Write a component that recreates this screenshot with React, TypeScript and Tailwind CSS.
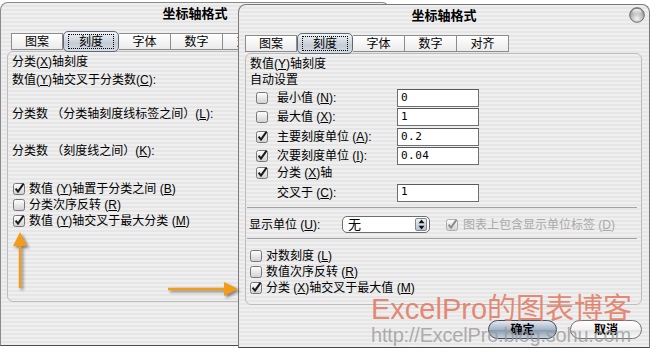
import React from 'react';

const FONT = "font-['Liberation_Sans','Noto_Sans_CJK_SC',sans-serif]";
const STRIPES =
  'bg-[repeating-linear-gradient(to_bottom,#efefef_0px,#efefef_2px,#e6e6e6_2px,#e6e6e6_4px)]';

function Check({ on, dim }: { on?: boolean; dim?: boolean }) {
  return (
    <svg width="12" height="12" viewBox="0 0 12 12" className="shrink-0 overflow-visible">
      <defs>
        <linearGradient id="cbg" x1="0" y1="0" x2="0" y2="1">
          <stop offset="0" stopColor="#ffffff" />
          <stop offset="1" stopColor="#d0d0d0" />
        </linearGradient>
      </defs>
      <rect x="0.5" y="0.5" width="11" height="11" rx="2" fill="url(#cbg)" stroke={dim ? '#acacac' : '#777'} />
      {on && (
        <path
          d="M2.6 5.6 L5 8.6 L10.6 0.6"
          fill="none"
          stroke={dim ? '#8c8c8c' : '#1a1a1a'}
          strokeWidth="2"
        />
      )}
    </svg>
  );
}

function Mn({ k }: { k: string }) {
  // mnemonic letter in half-width parens
  return (
    <span>
      (<u>{k}</u>)
    </span>
  );
}

function Tabs({ active }: { active: number }) {
  const labels = ['图案', '刻度', '字体', '数字', '对齐'];
  return (
    <div className="flex h-[17px] items-stretch text-[12px]">
      {labels.map((l, i) =>
        i === active ? (
          <div
            key={l}
            className="relative z-10 -my-[2px] flex w-[56px] items-center justify-center rounded-[5px] border border-[#5d6877] bg-[linear-gradient(to_bottom,#f1f4f7,#c4ccd6_60%,#d6dce3)]"
          >
            <span className="flex h-[15px] w-[46px] items-center justify-center border border-dotted border-black leading-none">
              {l}
            </span>
          </div>
        ) : (
          <div
            key={l}
            className={
              'flex w-[52px] items-center justify-center border-y border-r border-[#8c8c8c] bg-[linear-gradient(to_bottom,#ffffff,#ebebeb)] leading-none ' +
              (i === 0 ? 'border-l' : '')
            }
          >
            {l}
          </div>
        ),
      )}
    </div>
  );
}

function CloseBtn() {
  return (
    <svg width="16" height="16" viewBox="0 0 16 16" className="justify-self-end mr-[4px]">
      <defs>
        <radialGradient id="cls" cx="0.5" cy="0.75" r="0.7">
          <stop offset="0" stopColor="#f4f4f4" />
          <stop offset="1" stopColor="#8d8d8d" />
        </radialGradient>
        <linearGradient id="clh" x1="0" y1="0" x2="0" y2="1">
          <stop offset="0" stopColor="#ffffff" stopOpacity="0.95" />
          <stop offset="1" stopColor="#ffffff" stopOpacity="0" />
        </linearGradient>
      </defs>
      <circle cx="8" cy="8" r="7.3" fill="url(#cls)" stroke="#6c6c6c" />
      <ellipse cx="8" cy="5" rx="4.6" ry="3" fill="url(#clh)" />
    </svg>
  );
}

function Field({ v }: { v: string }) {
  return (
    <div className="flex h-[18px] w-[82px] items-center border border-[#6f6f6f] border-t-[#5a5a5a] bg-white pl-[3px] font-['DejaVu_Sans_Mono',monospace] text-[11px] tracking-[0.5px]">
      {v}
    </div>
  );
}

function LeftWindow() {
  return (
    <div
      className={`absolute left-0 top-[2px] flex h-[344px] w-[390px] flex-col rounded-t-[8px] border border-[#8a8a8a] border-b-[#4d4d4d] ${STRIPES}`}
    >
      <div className="grid h-[20px] grid-cols-[1fr_auto_1fr] items-center">
        <span />
        <span className="text-[13px] font-bold leading-none">坐标轴格式</span>
        <span />
      </div>
      <div className="ml-[10px] mt-[10px]">
        <Tabs active={1} />
      </div>
      <div
        className={`ml-[6px] mt-[1px] flex h-[251px] w-[397px] flex-col rounded-[6px] border border-[#bdbdbd] text-[12px] ${STRIPES}`}
      >
        <div className="mt-[1px] flex h-[17px] items-center pl-[4px]">
          分类 <Mn k="X" />
          轴刻度
        </div>
        <div className="mt-[1px] flex h-[17px] items-center pl-[4px]">
          数值 <Mn k="Y" />
          轴交叉于分类数 <Mn k="C" />:
        </div>
        <div className="mt-[17px] flex h-[17px] items-center pl-[4px]">
          分类数 （分类轴刻度线标签之间）<Mn k="L" />:
        </div>
        <div className="mt-[20px] flex h-[17px] items-center pl-[4px]">
          分类数 （刻度线之间）<Mn k="K" />:
        </div>
        <div className="mt-[22px] flex h-[16px] items-center gap-[4px] pl-[5px]">
          <Check on />
          <span>
            数值 <Mn k="Y" />
            轴置于分类之间 <Mn k="B" />
          </span>
        </div>
        <div className="flex h-[16px] items-center gap-[4px] pl-[5px]">
          <Check />
          <span>
            分类次序反转 <Mn k="R" />
          </span>
        </div>
        <div className="flex h-[16px] items-center gap-[4px] pl-[5px]">
          <Check on />
          <span>
            数值 <Mn k="Y" />
            轴交叉于最大分类 <Mn k="M" />
          </span>
        </div>
      </div>
    </div>
  );
}

function InputRow({ on, label, v }: { on: boolean; label: React.ReactNode; v: string }) {
  return (
    <div className="flex h-[19.5px] items-center pl-[10px]">
      <Check on={on} />
      <span className="ml-[9px] w-[120px]">{label}</span>
      <Field v={v} />
    </div>
  );
}

function RightWindow() {
  return (
    <div
      className={`absolute left-[238px] top-[4px] flex h-[344px] w-[412px] flex-col rounded-t-[8px] border border-[#7a7a7a] border-b-[#474747] ${STRIPES}`}
    >
      <div className="grid h-[20px] grid-cols-[1fr_auto_1fr] items-center">
        <span />
        <span className="text-[13px] font-bold leading-none">坐标轴格式</span>
        <CloseBtn />
      </div>
      <div className="ml-[6px] mt-[10px]">
        <Tabs active={1} />
      </div>
      <div
        className={`ml-[6px] mt-[1px] flex h-[252px] w-[397px] flex-col rounded-[6px] border border-[#bdbdbd] text-[12px] ${STRIPES}`}
      >
        <div className="mt-[1px] flex h-[17px] items-center pl-[4px]">
          数值 <Mn k="Y" />
          轴刻度
        </div>
        <div className="flex h-[16px] items-center pl-[4px]">自动设置</div>
        <InputRow
          on={false}
          v="0"
          label={
            <>
              最小值 <Mn k="N" />:
            </>
          }
        />
        <InputRow
          on={false}
          v="1"
          label={
            <>
              最大值 <Mn k="X" />:
            </>
          }
        />
        <InputRow
          on
          v="0.2"
          label={
            <>
              主要刻度单位 <Mn k="A" />:
            </>
          }
        />
        <InputRow
          on
          v="0.04"
          label={
            <>
              次要刻度单位 <Mn k="I" />:
            </>
          }
        />
        <div className="flex h-[13px] items-center pl-[10px]">
          <Check on />
          <span className="ml-[9px]">
            分类 <Mn k="X" />
            轴
          </span>
        </div>
        <div className="mt-[4px] flex h-[19px] items-center pl-[31px]">
          <span className="w-[120px]">
            交叉于 <Mn k="C" />:
          </span>
          <Field v="1" />
        </div>
        <div className="ml-[1px] mr-[4px] mt-[5px] h-0 border-t border-[#a2a2a2]" />
        <div className="mt-[7px] flex h-[19px] items-center pl-[3px]">
          <span className="w-[93px]">
            显示单位 <Mn k="U" />:
          </span>
          <div className="flex h-[17px] w-[88px] items-stretch rounded-[5px] border border-[#6e6e6e] bg-white">
            <span className="flex flex-1 items-center pl-[5px] text-[13px] leading-none">无</span>
            <span className="my-[1px] mr-[2px] flex w-[12px] items-center justify-center rounded-[2px] border border-[#7d8897] bg-[linear-gradient(to_bottom,#eef2f7,#b6c1ce)]">
              <svg width="7" height="11" viewBox="0 0 7 11">
                <path d="M3.5 0.5 L6.5 4.2 L0.5 4.2 Z" fill="#111" />
                <path d="M3.5 10.5 L6.5 6.8 L0.5 6.8 Z" fill="#111" />
              </svg>
            </span>
          </div>
          <span className="ml-[16px] flex items-center gap-[5px] text-[#a9a9a9]">
            <Check on dim />
            <span>
              图表上包含显示单位标签 <Mn k="D" />
            </span>
          </span>
        </div>
        <div className="ml-[1px] mr-[4px] mt-[4px] h-0 border-t border-[#a2a2a2]" />
        <div className="mt-[9px] flex h-[16px] items-center gap-[4px] pl-[4px]">
          <Check />
          <span>
            对数刻度 <Mn k="L" />
          </span>
        </div>
        <div className="flex h-[16px] items-center gap-[4px] pl-[4px]">
          <Check />
          <span>
            数值次序反转 <Mn k="R" />
          </span>
        </div>
        <div className="flex h-[16px] items-center gap-[4px] pl-[4px]">
          <Check on />
          <span>
            分类 <Mn k="X" />
            轴交叉于最大值 <Mn k="M" />
          </span>
        </div>
      </div>
      <div className="mr-[7px] mt-[15px] flex justify-end gap-[13px] text-[12px] font-bold">
        <button className="flex h-[19px] w-[69px] items-center justify-center rounded-full border border-[#3e4c5e] bg-[linear-gradient(to_bottom,#e3e9f0,#a4b4c6_50%,#8a9db3_55%,#c5d1de)] leading-none">
          确定
        </button>
        <button className="flex h-[19px] w-[72px] items-center justify-center rounded-full border border-[#737373] bg-[linear-gradient(to_bottom,#ffffff,#f2f2f2_50%,#e2e2e2_55%,#fafafa)] leading-none">
          取消
        </button>
      </div>
    </div>
  );
}

function Arrows() {
  return (
    <>
      <svg
        width="20"
        height="64"
        viewBox="0 0 20 64"
        className="absolute left-[10px] top-[230px] drop-shadow-[2px_2px_1.5px_rgba(0,0,0,0.45)]"
      >
        <path d="M10 2 L17 16 L11.2 16 L11.2 58 L8.8 58 L8.8 16 L3 16 Z" fill="#f39c1a" />
      </svg>
      <svg
        width="76"
        height="20"
        viewBox="0 0 76 20"
        className="absolute left-[166px] top-[279px] drop-shadow-[2px_2px_1.5px_rgba(0,0,0,0.45)]"
      >
        <path d="M2 8.8 L58 8.8 L58 3 L72 10 L58 17 L58 11.2 L2 11.2 Z" fill="#f39c1a" />
      </svg>
    </>
  );
}

export default function App() {
  return (
    <div className={`relative h-[355px] w-[656px] overflow-hidden bg-white text-black ${FONT}`}>
      <LeftWindow />
      <RightWindow />
      <div className="pointer-events-none absolute left-[371px] top-[292px] flex flex-col">
        <span className="text-[29px] leading-[34px] text-[#e2775e]/85">ExcelPro的图表博客</span>
        <span className="-mt-[2px] text-[20px] leading-[22px] tracking-[-0.2px] text-[#9a9a9a]/80">
          http://ExcelPro.blog.sohu.com
        </span>
      </div>
      <Arrows />
    </div>
  );
}
